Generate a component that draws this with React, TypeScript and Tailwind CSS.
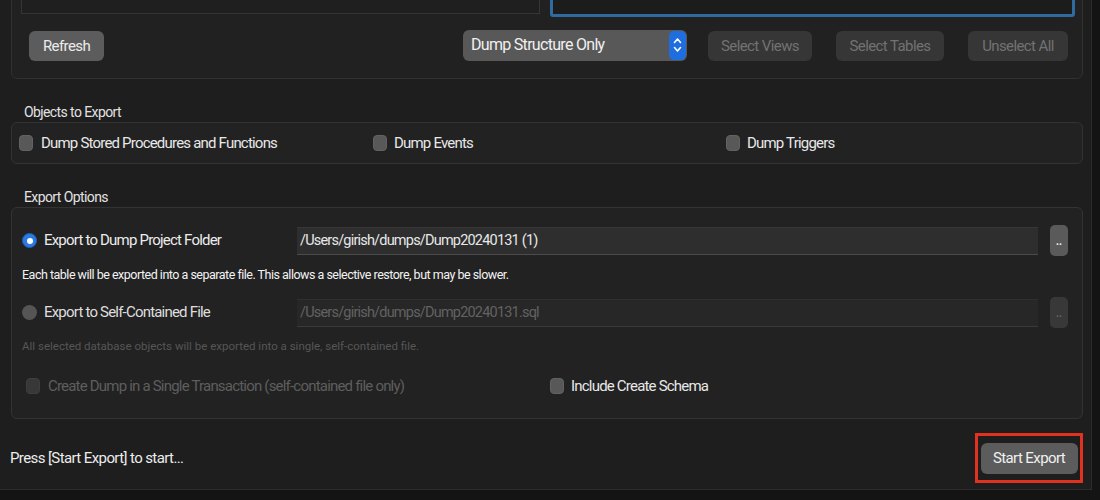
import React from "react";

function Checkbox({ disabled }: { disabled?: boolean }) {
  return (
    <span
      className={`inline-block w-[14px] h-[16px] rounded-[4px] shrink-0 border ${
        disabled ? "bg-[#383838] border-[#3e3e3e]" : "bg-[#585858] border-[#626262]"
      }`}
    />
  );
}

function Radio({ checked, disabled }: { checked?: boolean; disabled?: boolean }) {
  if (checked) {
    return (
      <span className="flex items-center justify-center w-[15px] h-[15px] rounded-full bg-[#2a7ae2] border border-[#1f5fb8] shrink-0">
        <span className="w-[6px] h-[6px] rounded-full bg-white" />
      </span>
    );
  }
  return (
    <span
      className={`inline-block w-[15px] h-[15px] rounded-full shrink-0 ${
        disabled ? "bg-[#3c3c3c]" : "bg-[#555555]"
      }`}
    />
  );
}

function DotsButton({ disabled }: { disabled?: boolean }) {
  return (
    <div
      className={`flex items-end justify-center pb-[9px] w-[18px] h-[31px] rounded-[5px] ${
        disabled ? "bg-[#383838]" : "bg-[#5a5a5a]"
      }`}
    >
      <span className={`text-[10px] leading-none font-bold tracking-normal ${disabled ? "text-[#6a6a6a]" : "text-white"}`}>..</span>
    </div>
  );
}

function Field({ value, disabled }: { value: string; disabled?: boolean }) {
  return (
    <div
      className={`flex items-center w-[741px] h-[28px] pl-[3px] border-t border-b ${
        disabled
          ? "bg-[#272727] border-t-[#2f2f2f] border-b-[#3a3a3a] text-[#626262]"
          : "bg-[#2e2e2e] border-t-[#373737] border-b-[#4c4c4c] text-[#e8e8e8]"
      } text-[14.5px] tracking-[-0.8px]`}
    >
      {value}
    </div>
  );
}

function SmallButton({ label, width, disabled }: { label: string; width: string; disabled?: boolean }) {
  return (
    <div
      className={`flex items-center justify-center h-[30px] rounded-[6px] text-[15px] tracking-[-0.6px] ${width} ${
        disabled ? "bg-[#363636] text-[#727272]" : "bg-[#5c5c5c] text-[#ececec]"
      }`}
    >
      {label}
    </div>
  );
}

export default function App() {
  return (
    <div className="w-[1100px] h-[500px] bg-[#141414] overflow-hidden font-['Roboto',sans-serif]">
      <div className="w-[1092px] h-[490px] bg-[#1e1e1e] border-r border-b border-[#2c2c2c] flex flex-col">
        {/* Table selection panel */}
        <div className="ml-[11px] w-[1072px] mt-[-20px] h-[99px] rounded-b-[6px] border border-[#313131] bg-[#212121] flex flex-col">
          <div className="flex items-start h-[36px] pl-[9px]">
            <div className="w-[519px] h-[33px] border-r border-b border-l border-[#353535] bg-[#1f1f1f]" />
            <div className="ml-[10px] w-[525px] h-[36px] border-[3px] border-[#2f6aa0] rounded-b-[3px] bg-[#1c1c1c]" />
          </div>
          <div className="flex items-center mt-[14px] pl-[17px]">
            <SmallButton label="Refresh" width="w-[75px]" />
            <div className="ml-[359px] flex items-center justify-between w-[224px] h-[31px] rounded-[6px] bg-[#585858] pl-[8px] pr-[1px] mt-[-2px]">
              <span className="text-[16px] tracking-[-0.7px] text-[#f0f0f0]">Dump Structure Only</span>
              <span className="flex flex-col items-center justify-center w-[17px] h-[29px] rounded-[5px] bg-[#1f6ee0]">
                <svg width="9" height="20" viewBox="0 0 9 20" fill="none" stroke="white" strokeWidth="1.6" strokeLinecap="round" strokeLinejoin="round">
                  <path d="M1.5 7.5 L4.5 4 L7.5 7.5" />
                  <path d="M1.5 12.5 L4.5 16 L7.5 12.5" />
                </svg>
              </span>
            </div>
            <div className="ml-[21px]">
              <SmallButton label="Select Views" width="w-[104px]" disabled />
            </div>
            <div className="ml-[24px]">
              <SmallButton label="Select Tables" width="w-[108px]" disabled />
            </div>
            <div className="ml-[24px]">
              <SmallButton label="Unselect All" width="w-[100px]" disabled />
            </div>
          </div>
        </div>

        {/* Objects to Export */}
        <div className="ml-[24px] mt-[23px] h-[20px] flex items-center text-[14px] tracking-[-0.6px] text-[#e2e2e2]">Objects to Export</div>
        <div className="ml-[11px] w-[1072px] h-[42px] rounded-[6px] border border-[#333333] bg-[#222222] flex items-center pl-[7px] text-[15px] tracking-[-0.8px] text-[#e8e8e8]">
          <div className="flex items-center gap-[8px] w-[354px]">
            <Checkbox />
            <span>Dump Stored Procedures and Functions</span>
          </div>
          <div className="flex items-center gap-[7px] w-[353px]">
            <Checkbox />
            <span>Dump Events</span>
          </div>
          <div className="flex items-center gap-[7px]">
            <Checkbox />
            <span>Dump Triggers</span>
          </div>
        </div>

        {/* Export Options */}
        <div className="ml-[24px] mt-[23px] h-[20px] flex items-center text-[14px] tracking-[-0.6px] text-[#e2e2e2]">Export Options</div>
        <div className="ml-[11px] w-[1072px] h-[212px] rounded-[6px] border border-[#333333] bg-[#222222] flex flex-col pl-[10px] text-[15px] tracking-[-0.8px]">
          <div className="flex items-center mt-[17px] h-[31px]">
            <div className="flex items-center gap-[7px] w-[275px] text-[#ececec]">
              <Radio checked />
              <span>Export to Dump Project Folder</span>
            </div>
            <Field value="/Users/girish/dumps/Dump20240131 (1)" />
            <div className="ml-[12px]">
              <DotsButton />
            </div>
          </div>
          <div className="mt-[9px] h-[20px] flex items-center text-[12.5px] tracking-[-0.5px] text-[#f2f2f2]">
            Each table will be exported into a separate file. This allows a selective restore, but may be slower.
          </div>
          <div className="flex items-center mt-[12px] h-[31px]">
            <div className="flex items-center gap-[7px] w-[275px] text-[#dedede]">
              <Radio />
              <span>Export to Self-Contained File</span>
            </div>
            <Field value="/Users/girish/dumps/Dump20240131.sql" disabled />
            <div className="ml-[12px]">
              <DotsButton disabled />
            </div>
          </div>
          <div className="mt-[9px] h-[20px] flex items-center text-[11.5px] tracking-normal text-[#565656]">
            All selected database objects will be exported into a single, self-contained file.
          </div>
          <div className="flex items-center mt-[19px] h-[20px] pl-[4px]">
            <div className="flex items-center gap-[8px] w-[524px] text-[#5e5e5e]">
              <Checkbox disabled />
              <span>Create Dump in a Single Transaction (self-contained file only)</span>
            </div>
            <div className="flex items-center gap-[7px] text-[#e8e8e8]">
              <Checkbox />
              <span>Include Create Schema</span>
            </div>
          </div>
        </div>

        {/* Footer */}
        <div className="flex items-center justify-between mt-[14px] pl-[10px] pr-[8px]">
          <span className="text-[15px] tracking-[-0.6px] text-[#ececec]">Press [Start Export] to start...</span>
          <div className="flex items-center justify-center w-[108px] h-[50px] border-[3px] border-[#e0321e]">
            <div className="flex items-center justify-center w-[97px] h-[31px] rounded-[6px] bg-[#5c5c5c] text-[15px] tracking-[-0.6px] text-[#f0f0f0]">
              Start Export
            </div>
          </div>
        </div>
      </div>
    </div>
  );
}
